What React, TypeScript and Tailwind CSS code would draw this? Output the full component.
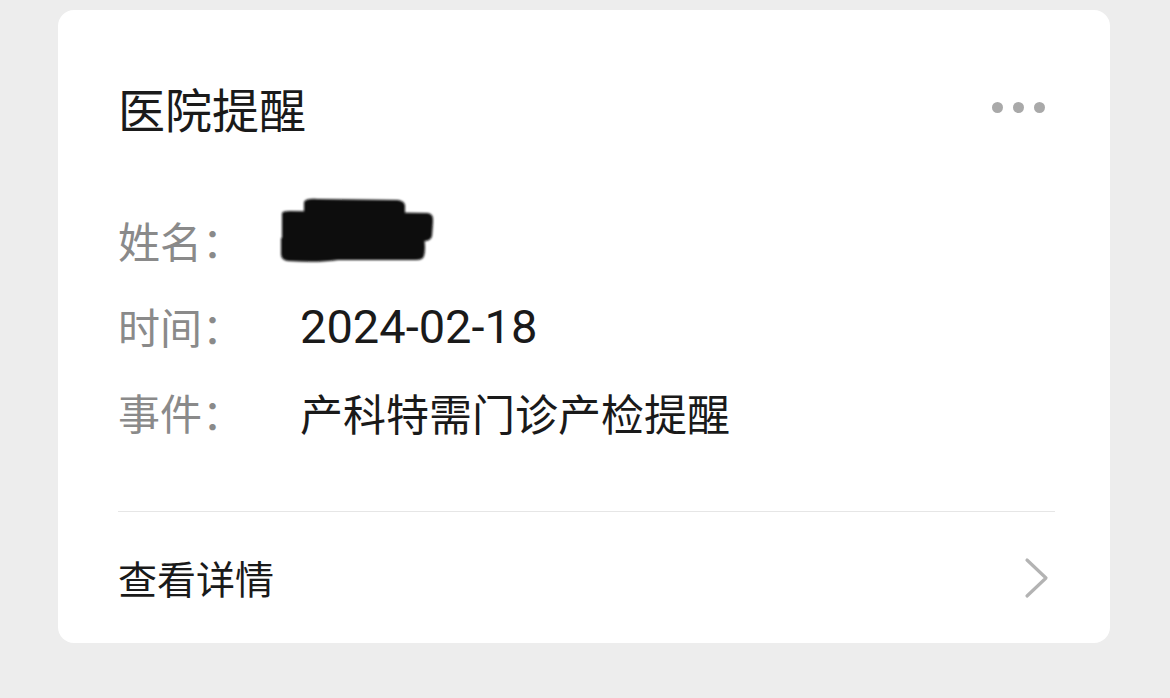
const cjk = "font-['Noto_Sans_CJK_SC',sans-serif]"

const Row = ({ label, children }: { label: string; children: React.ReactNode }) => {
  return (
    <div className="flex items-center h-[86px]">
      <div className={`w-[182px] shrink-0 text-[42px] leading-none text-[#8a8a8a] ${cjk}`}>{label}</div>
      <div className="flex items-center">{children}</div>
    </div>
  )
}

const Redacted = () => {
  return (
    <svg width="160" height="70" viewBox="0 0 160 70" className="-ml-[22px] -mt-[18px]">
      <defs>
        <filter id="soft" x="-10%" y="-10%" width="120%" height="120%">
          <feGaussianBlur stdDeviation="1.2" />
        </filter>
      </defs>
      <g fill="#0a0a0a" filter="url(#soft)">
        <path d="M26 6 Q28 2 40 3 L120 4 Q128 5 127 12 L127 22 L26 22 Z" />
        <path d="M4 18 Q3 15 12 15 L150 17 Q156 18 155 26 L154 40 Q153 45 146 45 L4 44 Z" />
        <path d="M3 42 L146 41 Q148 52 146 60 Q145 64 138 64 L60 64 Q40 67 10 65 Q3 64 3 58 Z" />
      </g>
    </svg>
  )
}

const App = () => {
  return (
    <div className="w-[1170px] h-[698px] bg-[#ededed] pt-[10px] pl-[58px]">
      <div className="w-[1052px] h-[633px] bg-white rounded-[16px] pl-[60px] pr-[55px] flex flex-col">
        <div className="flex items-center justify-between h-[70px] mt-[62px]">
          <p className={`text-[47px] leading-none text-[#1a1a1a] ${cjk}`}>医院提醒</p>
          <div className="flex gap-[10px] pr-[10px]">
            <span className="w-[11px] h-[11px] rounded-full bg-[#a9a9a9]"></span>
            <span className="w-[11px] h-[11px] rounded-full bg-[#a9a9a9]"></span>
            <span className="w-[11px] h-[11px] rounded-full bg-[#a9a9a9]"></span>
          </div>
        </div>

        <div className="mt-[55px] flex flex-col">
          <Row label="姓名：">
            <Redacted />
          </Row>
          <Row label="时间：">
            <span className="text-[47px] leading-none text-[#1a1a1a] font-['Roboto',sans-serif]">2024-02-18</span>
          </Row>
          <Row label="事件：">
            <span className={`text-[43px] leading-none text-[#1a1a1a] ${cjk}`}>产科特需门诊产检提醒</span>
          </Row>
        </div>

        <div className="h-px bg-[#e6e6e6] mt-[56px]"></div>

        <div className="flex-1 flex items-center justify-between">
          <p className={`text-[39px] leading-none text-[#1a1a1a] ${cjk}`}>查看详情</p>
          <svg width="26" height="42" viewBox="0 0 26 42" className="mr-[5px]">
            <path d="M3 3 L22 21 L3 39" fill="none" stroke="#b3b3b3" strokeWidth="3.2" strokeLinecap="round" strokeLinejoin="round" />
          </svg>
        </div>
      </div>
    </div>
  )
}

export default App
